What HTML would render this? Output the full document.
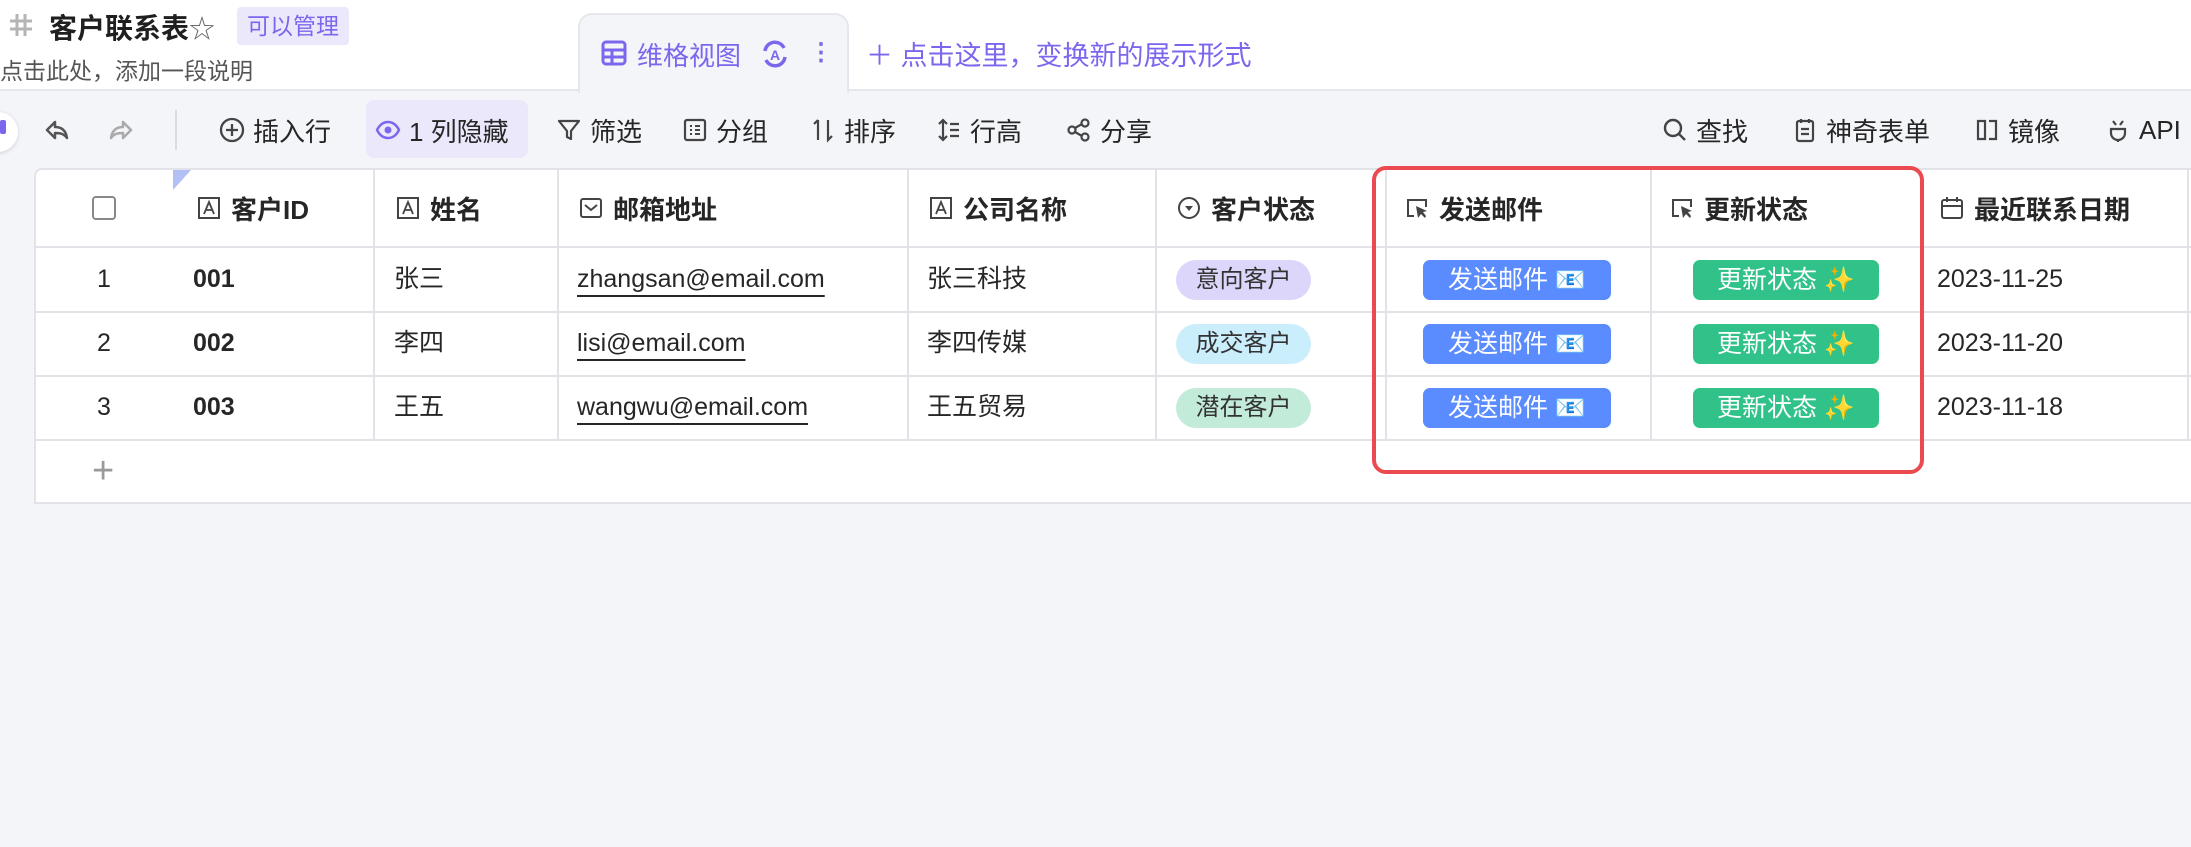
<!DOCTYPE html>
<html><head><meta charset="utf-8"><style>
*{box-sizing:border-box;margin:0;padding:0}
body{width:2191px;height:847px;background:#f4f5f9;font-family:"Liberation Sans","Noto Sans CJK SC",sans-serif;color:#262626;position:relative;overflow:hidden;font-size:25px}
.a{position:absolute;white-space:nowrap}
.top{position:absolute;left:0;top:0;width:2191px;height:91px;background:#fff;border-bottom:2px solid #e6e7ee}
.tab{position:absolute;left:578px;top:13px;width:271px;height:80px;background:#f4f5f9;border:2px solid #e6e7ee;border-bottom:none;border-radius:14px 14px 0 0}
.purple{color:#7b67ee}
.tb{position:absolute;top:112px;height:36px;display:flex;align-items:center;gap:8px;font-size:26px;color:#262626}
.tb svg{width:26px;height:26px}
.table{position:absolute;left:34px;top:168px;width:2160px;height:336px;background:#fff;border:2px solid #e2e3e8;border-right:none;border-radius:8px 0 0 0}
.hl{position:absolute;left:34px;width:2160px;height:2px;background:#e2e3e8}
.vl{position:absolute;top:168px;height:273px;width:2px;background:#e2e3e8}
.hd{position:absolute;top:190px;height:36px;display:flex;align-items:center;gap:10px;font-weight:bold;font-size:26px}
.hd svg{width:24px;height:24px}
.c{position:absolute;height:36px;line-height:36px;font-size:25px}
.pill{position:absolute;left:1176px;width:135px;height:40px;border-radius:20px;font-size:24px;line-height:40px;text-align:center;color:#333}
.btn{position:absolute;height:40px;border-radius:7px;color:#fff;font-size:25px;line-height:40px;text-align:center}
.b1{left:1423px;width:188px;background:#5a8cff}
.b2{left:1693px;width:186px;background:#31c28a}
.em{text-decoration:underline;text-decoration-thickness:2px;text-underline-offset:8px}
</style></head><body>
<div class="top"></div>
<svg class="a" style="left:8px;top:12px" width="26" height="26" viewBox="0 0 26 26"><path d="M9 2v22M17 2v22M2 9h22M2 17h22" stroke="#b5b5b5" stroke-width="3"/></svg>
<div class="a" style="left:49px;top:7px;font-size:28px;font-weight:bold;color:#1f1f1f">客户联系表<span style="font-weight:normal;color:#666;font-size:26px">☆</span></div>
<div class="a" style="left:237px;top:7px;width:112px;height:38px;background:#ece8fc;border-radius:4px;color:#7b67ee;font-size:23px;line-height:38px;text-align:center">可以管理</div>
<div class="a" style="left:0;top:52px;font-size:23px;color:#555">点击此处，添加一段说明</div>
<div class="tab"></div>
<svg class="a" style="left:601px;top:40px" width="26" height="26" viewBox="0 0 26 26"><rect x="2" y="2" width="22" height="22" rx="3" fill="none" stroke="#7b67ee" stroke-width="3"/><path d="M2 10h22M2 17h22M11 10v14" stroke="#7b67ee" stroke-width="3"/></svg>
<div class="a purple" style="left:637px;top:36px;font-size:26px">维格视图</div>
<svg class="a" style="left:760px;top:39px" width="30" height="30" viewBox="0 0 30 30"><path d="M5 12a10 10 0 0 1 19-3M25 18a10 10 0 0 1-19 3" fill="none" stroke="#7b67ee" stroke-width="3.5"/><text x="15" y="21" font-size="14" font-weight="bold" text-anchor="middle" fill="#7b67ee" font-family="Liberation Sans">A</text></svg>
<div class="a" style="left:809px;top:38px;font-size:24px;font-weight:bold;color:#7b67ee">⋮</div>
<div class="a purple" style="left:866px;top:34px;font-size:27px">＋ 点击这里，变换新的展示形式</div>
<div class="a" style="left:-22px;top:112px;width:40px;height:40px;border-radius:20px;background:#fff;box-shadow:0 1px 4px rgba(0,0,0,.15)"></div>
<div class="a" style="left:0;top:120px;width:6px;height:14px;background:#7b67ee;border-radius:2px"></div>
<svg class="a" style="left:44px;top:117px" width="26" height="26" viewBox="0 0 26 26"><path d="M11 5L3 13l8 8v-5c6 0 9 1 12 5-1-7-5-11-12-11z" fill="none" stroke="#555" stroke-width="2.5" stroke-linejoin="round"/></svg>
<svg class="a" style="left:108px;top:117px" width="26" height="26" viewBox="0 0 26 26"><path d="M15 5l8 8-8 8v-5c-6 0-9 1-12 5 1-7 5-11 12-11z" fill="none" stroke="#aaa" stroke-width="2.5" stroke-linejoin="round"/></svg>
<div class="a" style="left:175px;top:110px;width:2px;height:40px;background:#ddd"></div>
<div class="tb" style="left:219px"><svg viewBox="0 0 26 26"><circle cx="13" cy="13" r="11" fill="none" stroke="#444" stroke-width="2.3"/><path d="M13 7v12M7 13h12" stroke="#444" stroke-width="2.3"/></svg>插入行</div>
<div class="a" style="left:366px;top:100px;width:162px;height:58px;background:#ece8fc;border-radius:8px"></div>
<div class="tb purple" style="left:375px"><svg viewBox="0 0 26 26"><path d="M2 13c3-6 7-8 11-8s8 2 11 8c-3 6-7 8-11 8s-8-2-11-8z" fill="none" stroke="#7b67ee" stroke-width="2.5"/><circle cx="13" cy="13" r="3.5" fill="#7b67ee"/></svg>1 列隐藏</div>
<div class="tb" style="left:556px"><svg viewBox="0 0 26 26"><path d="M3 4h20l-8 10v8l-4-2v-6z" fill="none" stroke="#444" stroke-width="2.2" stroke-linejoin="round"/></svg>筛选</div>
<div class="tb" style="left:682px"><svg viewBox="0 0 26 26"><rect x="3" y="3" width="20" height="20" rx="2" fill="none" stroke="#444" stroke-width="2.2"/><path d="M8 9h2M8 13h2M8 17h2M13 9h5M13 13h5M13 17h5" stroke="#444" stroke-width="2"/></svg>分组</div>
<div class="tb" style="left:810px"><svg viewBox="0 0 26 26"><path d="M8 3v20M4 7l4-4M18 3v20l4-4" fill="none" stroke="#444" stroke-width="2.2"/></svg>排序</div>
<div class="tb" style="left:936px"><svg viewBox="0 0 26 26"><path d="M7 3v20M3 7l4-4 4 4M3 19l4 4 4-4M14 7h9M14 13h9M14 19h9" fill="none" stroke="#444" stroke-width="2.2"/></svg>行高</div>
<div class="tb" style="left:1066px"><svg viewBox="0 0 26 26"><circle cx="19" cy="6" r="3.5" fill="none" stroke="#444" stroke-width="2.2"/><circle cx="6" cy="13" r="3.5" fill="none" stroke="#444" stroke-width="2.2"/><circle cx="19" cy="20" r="3.5" fill="none" stroke="#444" stroke-width="2.2"/><path d="M9 11l7-4M9 15l7 4" stroke="#444" stroke-width="2.2"/></svg>分享</div>
<div class="tb" style="left:1662px"><svg viewBox="0 0 26 26"><circle cx="11" cy="11" r="8" fill="none" stroke="#444" stroke-width="2.4"/><path d="M17 17l6 6" stroke="#444" stroke-width="2.4"/></svg>查找</div>
<div class="tb" style="left:1792px"><svg viewBox="0 0 26 26"><rect x="5" y="4" width="16" height="20" rx="2" fill="none" stroke="#444" stroke-width="2.2"/><path d="M9 2v4M17 2v4M9 12h8M9 17h8" stroke="#444" stroke-width="2.2"/></svg>神奇表单</div>
<div class="tb" style="left:1974px"><svg viewBox="0 0 26 26"><path d="M11 4H4v18h7zM15 4h7v18h-7" fill="none" stroke="#444" stroke-width="2.2"/></svg>镜像</div>
<div class="tb" style="left:2105px"><svg viewBox="0 0 26 26"><path d="M8 4l3 4M18 4l-3 4M6 12h14v4a7 7 0 0 1-14 0zM13 23v2" fill="none" stroke="#444" stroke-width="2.2"/></svg>API</div>
<div class="table"></div>
<div class="a" style="left:173px;top:170px;width:0;height:0;border-top:20px solid #b3c0f5;border-right:18px solid transparent"></div>
<div class="hl" style="top:246px"></div><div class="hl" style="top:311px"></div><div class="hl" style="top:375px"></div><div class="hl" style="top:439px"></div>
<div class="vl" style="left:373px"></div><div class="vl" style="left:557px"></div><div class="vl" style="left:907px"></div><div class="vl" style="left:1155px"></div><div class="vl" style="left:1385px"></div><div class="vl" style="left:1650px"></div><div class="vl" style="left:1920px"></div><div class="vl" style="left:2187px"></div>
<div class="a" style="left:92px;top:196px;width:24px;height:24px;border:2.5px solid #888;border-radius:4px"></div>
<div class="hd" style="left:197px"><svg viewBox="0 0 24 24"><rect x="2" y="2" width="20" height="20" fill="none" stroke="#444" stroke-width="2"/><path d="M7 18l5-12 5 12M9 14h6" fill="none" stroke="#444" stroke-width="1.8"/></svg>客户ID</div>
<div class="hd" style="left:396px"><svg viewBox="0 0 24 24"><rect x="2" y="2" width="20" height="20" fill="none" stroke="#444" stroke-width="2"/><path d="M7 18l5-12 5 12M9 14h6" fill="none" stroke="#444" stroke-width="1.8"/></svg>姓名</div>
<div class="hd" style="left:579px"><svg viewBox="0 0 24 24"><rect x="2" y="3" width="20" height="18" rx="2" fill="none" stroke="#444" stroke-width="2"/><path d="M6 9l6 5 6-5" fill="none" stroke="#444" stroke-width="2"/></svg>邮箱地址</div>
<div class="hd" style="left:929px"><svg viewBox="0 0 24 24"><rect x="2" y="2" width="20" height="20" fill="none" stroke="#444" stroke-width="2"/><path d="M7 18l5-12 5 12M9 14h6" fill="none" stroke="#444" stroke-width="1.8"/></svg>公司名称</div>
<div class="hd" style="left:1177px"><svg viewBox="0 0 24 24"><circle cx="12" cy="12" r="10" fill="none" stroke="#444" stroke-width="2"/><path d="M8 10l4 5 4-5z" fill="#444"/></svg>客户状态</div>
<div class="hd" style="left:1405px"><svg viewBox="0 0 24 24"><path d="M9 20H3V4h18v7" fill="none" stroke="#444" stroke-width="2"/><path d="M11 10l2 12 3-4 4 4 1-2-3-4 4-1z" fill="#444"/></svg>发送邮件</div>
<div class="hd" style="left:1670px"><svg viewBox="0 0 24 24"><path d="M9 20H3V4h18v7" fill="none" stroke="#444" stroke-width="2"/><path d="M11 10l2 12 3-4 4 4 1-2-3-4 4-1z" fill="#444"/></svg>更新状态</div>
<div class="hd" style="left:1940px"><svg viewBox="0 0 24 24"><rect x="2" y="4" width="20" height="18" rx="2" fill="none" stroke="#444" stroke-width="2"/><path d="M2 10h20M7 1v5M17 1v5" stroke="#444" stroke-width="2"/></svg>最近联系日期</div>
<div class="c" style="left:97px;top:261px">1</div><div class="c" style="left:97px;top:325px">2</div><div class="c" style="left:97px;top:389px">3</div>
<div class="c" style="left:193px;top:261px;font-weight:bold">001</div><div class="c" style="left:193px;top:325px;font-weight:bold">002</div><div class="c" style="left:193px;top:389px;font-weight:bold">003</div>
<div class="c" style="left:394px;top:261px">张三</div><div class="c" style="left:394px;top:325px">李四</div><div class="c" style="left:394px;top:389px">王五</div>
<div class="c em" style="left:577px;top:261px">zhangsan@email.com</div><div class="c em" style="left:577px;top:325px">lisi@email.com</div><div class="c em" style="left:577px;top:389px">wangwu@email.com</div>
<div class="c" style="left:927px;top:261px">张三科技</div><div class="c" style="left:927px;top:325px">李四传媒</div><div class="c" style="left:927px;top:389px">王五贸易</div>
<div class="pill" style="top:260px;background:#ddd6fb">意向客户</div><div class="pill" style="top:324px;background:#cbeefc">成交客户</div><div class="pill" style="top:388px;background:#c3ebd9">潜在客户</div>
<div class="btn b1" style="top:260px">发送邮件 📧</div><div class="btn b1" style="top:324px">发送邮件 📧</div><div class="btn b1" style="top:388px">发送邮件 📧</div>
<div class="btn b2" style="top:260px">更新状态 ✨</div><div class="btn b2" style="top:324px">更新状态 ✨</div><div class="btn b2" style="top:388px">更新状态 ✨</div>
<div class="c" style="left:1937px;top:261px">2023-11-25</div><div class="c" style="left:1937px;top:325px">2023-11-20</div><div class="c" style="left:1937px;top:389px">2023-11-18</div>
<div class="a" style="left:92px;top:450px;font-size:38px;color:#999;font-weight:300">+</div>
<div class="a" style="left:1372px;top:166px;width:552px;height:308px;border:4px solid #ea4a50;border-radius:14px"></div>
</body></html>
